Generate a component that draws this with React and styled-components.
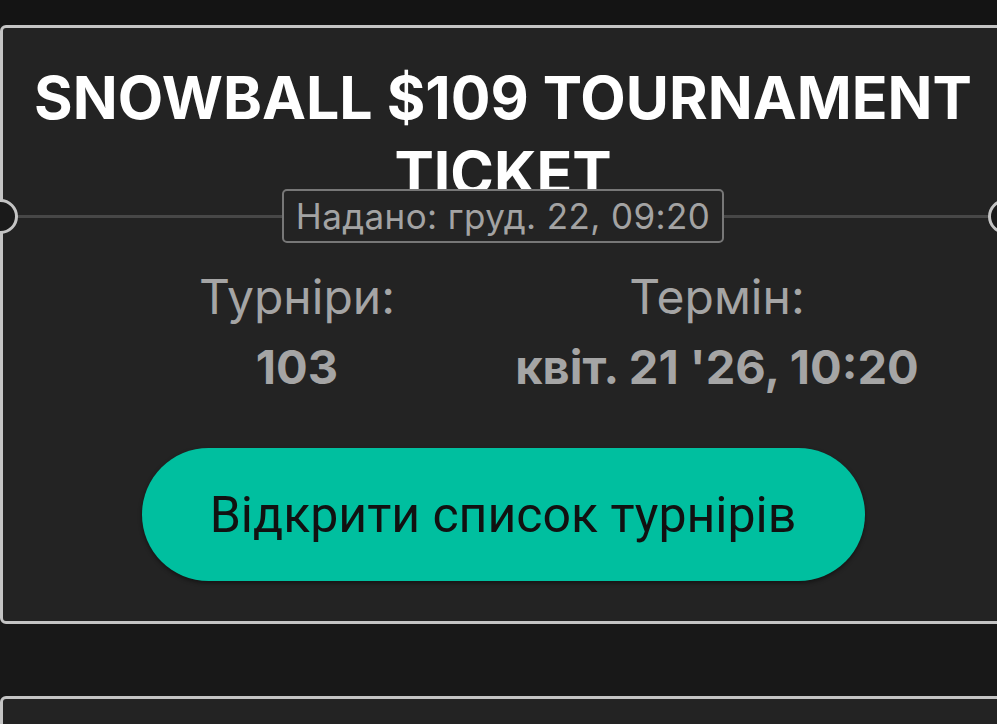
import React from 'react';
import styled, { createGlobalStyle } from 'styled-components';

const GlobalStyle = createGlobalStyle`
  html, body {
    margin: 0;
    padding: 0;
    overflow: hidden;
    background: #181818;
  }
  * {
    box-sizing: border-box;
  }
`;

const Page = styled.div`
  width: 997px;
  height: 724px;
  overflow: hidden;
  background: #181818;
  border-top: 25px solid #141414;
`;

const TicketCard = styled.div`
  position: relative;
  width: 1006px;
  margin-bottom: 72px;
  padding: ${(p) => (p.$empty ? '0' : '32px 0 40px')};
  min-height: ${(p) => (p.$empty ? '80px' : 'auto')};
  background: #232323;
  border: 3px solid #c4c4c4;
  border-radius: 6px;
`;

const Title = styled.h1`
  margin: 0;
  padding: 0 20px;
  font-family: Inter, "Open Sans", sans-serif;
  font-weight: 700;
  font-size: 59px;
  line-height: 75px;
  color: #ffffff;
  text-align: center;
`;

const Divider = styled.div`
  position: relative;
  display: flex;
  align-items: center;
  margin-top: -21px;
`;

const Line = styled.div`
  flex: 1;
  height: 3px;
  background: #474747;
`;

const Notch = styled.span`
  position: absolute;
  top: 50%;
  ${(p) => (p.$side === 'left' ? 'left: -20px;' : 'right: -20px;')}
  width: 35px;
  height: 35px;
  margin-top: -17px;
  border-radius: 50%;
  background: #1a1a1a;
  border: 3px solid #c4c4c4;
  z-index: 2;
`;

const Badge = styled.div`
  position: relative;
  z-index: 1;
  height: 54px;
  padding: 0 12px;
  display: flex;
  align-items: center;
  background: #232323;
  border: 2px solid #777777;
  border-radius: 5px;
  font-family: Inter, "Open Sans", sans-serif;
  font-size: 35px;
  letter-spacing: 0.4px;
  color: #a3a3a3;
  white-space: nowrap;
`;

const Stats = styled.div`
  display: grid;
  grid-template-columns: 420px 420px;
  justify-content: center;
  padding-left: 8px;
  margin-top: 24px;
`;

const Stat = styled.div`
  display: flex;
  flex-direction: column;
  align-items: center;
  font-family: Inter, "Open Sans", sans-serif;
  color: #a5a5a5;
`;

const StatLabel = styled.div`
  font-size: 48px;
  line-height: 60px;
`;

const StatValue = styled.div`
  margin-top: 10px;
  font-size: 47px;
  line-height: 60px;
  font-weight: 700;
  white-space: nowrap;
`;

const OpenButton = styled.button`
  display: block;
  width: 723px;
  height: 133px;
  margin: 51px auto 0;
  padding: 0;
  border: none;
  border-radius: 67px;
  background: #00bf9f;
  box-shadow: 0 2px 4px rgba(0, 0, 0, 0.45);
  font-family: Roboto, "Liberation Sans", sans-serif;
  font-size: 50px;
  color: #111111;
  cursor: pointer;
`;

const App = () => {
  return (
    <Page>
      <GlobalStyle />
      <TicketCard>
        <Title>
          SNOWBALL $109 TOURNAMENT
          <br />
          TICKET
        </Title>
        <Divider>
          <Notch $side="left" />
          <Line />
          <Badge>Надано: груд. 22, 09:20</Badge>
          <Line />
          <Notch $side="right" />
        </Divider>
        <Stats>
          <Stat>
            <StatLabel>Турніри:</StatLabel>
            <StatValue>103</StatValue>
          </Stat>
          <Stat>
            <StatLabel>Термін:</StatLabel>
            <StatValue>квіт. 21 '26, 10:20</StatValue>
          </Stat>
        </Stats>
        <OpenButton>Відкрити список турнірів</OpenButton>
      </TicketCard>
      <TicketCard $empty />
    </Page>
  );
};

export default App;
